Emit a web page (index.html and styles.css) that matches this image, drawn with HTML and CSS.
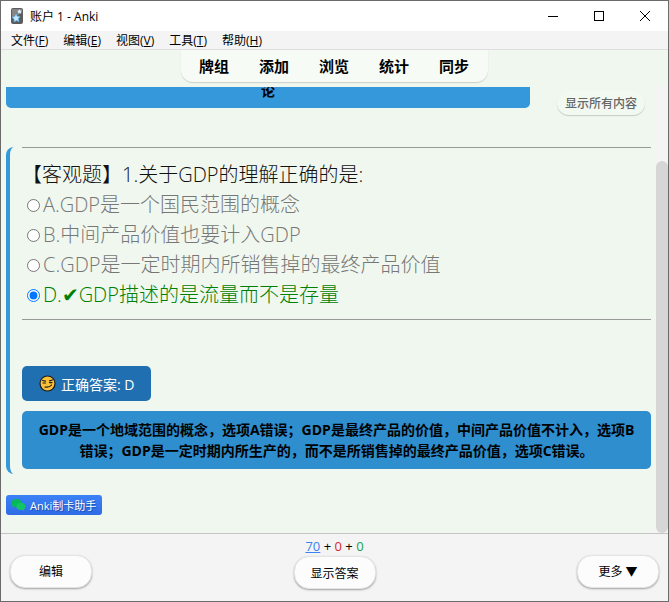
FILE: index.html
```
<!DOCTYPE html>
<html lang="zh-CN">
<head>
<meta charset="UTF-8">
<title>账户 1 - Anki</title>
<link rel="stylesheet" href="styles.css">
</head>
<body>
    <div class="window">
        <header class="titlebar">
            <svg class="app-icon" width="12" height="16" viewBox="0 0 12 16">
                <rect x="0" y="0" width="12" height="16" rx="2" fill="#5c5c5c"/>
                <path d="M1 1h10v4L1 10z" fill="#858585"/>
                <path d="M5 6l1.300 2.300 2.700.300-1.700 2.200.700 2.700-2.600-.900-2.400 1.300.100-2.800-2.100-1.800 2.700-.700z" fill="#c4e8fd" stroke="#58aee8" stroke-width=".8"/>
                <path d="M8.500 1.200l.7 1.400 1.600.2-1 1.200.2 1.600-1.500-.6-1.500.6.200-1.600-1-1.200 1.600-.2z" fill="#d9effc"/>
            </svg>
            <span class="window-title">账户 1 - Anki</span>
            <div class="window-controls">
                <button type="button" aria-label="最小化"><svg width="10" height="10"><path d="M0 5.500h10" stroke="#000"/></svg></button>
                <button type="button" aria-label="最大化"><svg width="10" height="10"><rect x="0.5" y="0.5" width="9" height="9" fill="none" stroke="#000"/></svg></button>
                <button type="button" aria-label="关闭"><svg width="10" height="10"><path d="M0 0l10 10M10 0L0 10" stroke="#000"/></svg></button>
            </div>
        </header>

        <nav class="menubar">
            <button type="button">文件(<u>F</u>)</button>
            <button type="button">编辑(<u>E</u>)</button>
            <button type="button">视图(<u>V</u>)</button>
            <button type="button">工具(<u>T</u>)</button>
            <button type="button">帮助(<u>H</u>)</button>
        </nav>

        <div class="toolbar">
            <nav class="tabs">
                <a href="#decks">牌组</a>
                <a href="#add">添加</a>
                <a href="#browse">浏览</a>
                <a href="#stats">统计</a>
                <a href="#sync">同步</a>
            </nav>
        </div>

        <main class="card-view">
            <div class="card">
                <div class="card-top">
                    <div class="chapter">论</div>
                    <button type="button" class="show-all">显示所有内容</button>
                </div>

                <section class="question">
                    <hr>
                    <form class="choices">
                        <p class="stem">【客观题】1.关于GDP的理解正确的是:</p>
                        <label><input type="radio" name="answer">A.GDP是一个国民范围的概念</label>
                        <label><input type="radio" name="answer">B.中间产品价值也要计入GDP</label>
                        <label><input type="radio" name="answer">C.GDP是一定时期内所销售掉的最终产品价值</label>
                        <label class="correct"><input type="radio" name="answer" checked>D.<span class="tick">✔</span>GDP描述的是流量而不是存量</label>
                    </form>
                    <hr>
                    <div class="answer">
                        <svg width="17" height="17" viewBox="0 0 17 17">
                            <circle cx="8.500" cy="8.500" r="7.500" fill="#fdc03a" stroke="#1c1c1c" stroke-width="1.200"/>
                            <path d="M3.500 5.500l3 .6M10.500 5.800l3-.8M4 8h2.500M10.500 7.600h2.500M6 12q4.500 .8 6.500-2" fill="none" stroke="#1c1c1c" stroke-width="1.200" stroke-linecap="round"/>
                        </svg>
                        <span>正确答案: D</span>
                    </div>
                    <div class="explain">GDP是一个地域范围的概念，选项A错误；GDP是最终产品的价值，中间产品价值不计入，选项B错误；GDP是一定时期内所生产的，而不是所销售掉的最终产品价值，选项C错误。</div>
                </section>

                <a class="helper" href="#helper">
                    <svg width="15" height="12" viewBox="0 0 15 12">
                        <path d="M5.500 0C2.500 0 .3 1.900.3 4.200c0 1.300.7 2.500 1.800 3.300L1.600 9l2-.9c.6.200 1.200.3 1.900.3 3 0 5.200-1.900 5.200-4.200S8.500 0 5.500 0z" fill="#07b85b"/>
                        <path d="M10 3.700c-2.600 0-4.600 1.600-4.600 3.700s2 3.700 4.600 3.700c.6 0 1.100-.1 1.600-.2l1.700.8-.4-1.400c1-.7 1.700-1.700 1.700-2.900 0-2.100-2-3.700-4.600-3.700z" fill="#12c466"/>
                    </svg>
                    <span>Anki制卡助手</span>
                </a>
            </div>
            <div class="scrollbar"><div class="thumb"></div></div>
        </main>

        <footer class="bottombar">
            <button type="button" class="pill">编辑</button>
            <div class="review">
                <div class="counts"><span class="new">70</span> + <span class="learn">0</span> + <span class="due">0</span></div>
                <button type="button" class="pill">显示答案</button>
            </div>
            <button type="button" class="pill">更多 ▼</button>
        </footer>
    </div>
</body>
</html>
```
FILE: styles.css
```
* {
    box-sizing: border-box;
}
body {
    margin: 0;
    font-family: "Open Sans", "Noto Sans CJK SC", sans-serif;
    font-size: 12px;
    color: #000;
}
button {
    font-family: inherit;
    font-size: 12px;
    color: inherit;
    border: none;
    background: none;
    padding: 0;
    cursor: pointer;
}
a {
    color: inherit;
    text-decoration: none;
}
.window {
    display: flex;
    flex-direction: column;
    height: 100vh;
    border: 1px solid #6b6b6b;
    background: #f0f7ef;
}

/* Title bar and menus */
.titlebar {
    display: flex;
    align-items: center;
    height: 30px;
    padding-left: 10px;
    background: #fff;
    flex: none;
}
.window-title {
    margin-left: 7px;
}
.window-controls {
    display: flex;
    margin-left: auto;
}
.window-controls button {
    width: 46px;
    height: 28px;
}
.window-controls svg {
    display: block;
    margin: auto;
}
.menubar {
    display: flex;
    align-items: center;
    gap: 15px;
    height: 19px;
    padding-left: 10px;
    background: #f4f4f4;
    border-bottom: 1px solid #dedede;
    flex: none;
}
.menubar button {
    line-height: 18px;
    padding-top: 2px;
}

/* Anki toolbar */
.toolbar {
    display: flex;
    justify-content: center;
    align-items: flex-start;
    height: 37px;
    flex: none;
}
.tabs {
    display: flex;
    gap: 30px;
    padding: 0 19px 0 18px;
    height: 32px;
    line-height: 32px;
    font-size: 15px;
    font-weight: 600;
    background: #f7fbf6;
    border-radius: 0 0 12px 12px;
    box-shadow: 0 1px 1px #ccd2cb;
}

/* Card */
.card-view {
    display: flex;
    flex: 1;
    min-height: 0;
    background: #f4f4f4;
}
.card {
    flex: 1;
    padding: 0 5px;
    background: #f0f7ef;
    border-radius: 0 0 10px 10px;
}
.card-top {
    display: flex;
    align-items: flex-start;
    justify-content: space-between;
    height: 60px;
    padding-right: 6px;
}
.chapter {
    width: 82%;
    height: 21px;
    line-height: 8px;
    overflow: hidden;
    background: #3498db;
    border-radius: 0 0 5px 5px;
    font-size: 14px;
    font-weight: bold;
    text-align: center;
}
.show-all {
    height: 24px;
    margin-top: 4px;
    padding: 0 8px;
    color: #666;
    font-weight: 500;
    border-radius: 12px;
    background: #f2f9f1;
    box-shadow: 0 1px 1px #c4cbc3;
}
.question {
    padding-left: 12px;
    border-left: 4px solid #3498db;
    border-radius: 8px;
    padding-bottom: 5px;
}
hr {
    margin: 0;
    border: none;
    border-top: 1px solid #999;
}
.choices {
    padding: 12px 0 9px;
    font-size: 20px;
    font-weight: 300;
    line-height: 30px;
    color: #777;
}
.stem {
    margin: 0;
    color: #111;
}
.choices label {
    display: flex;
    align-items: center;
    padding-left: 4px;
}
.choices input {
    width: 13px;
    height: 13px;
    margin: 0 3px 0 1px;
}
.choices .correct {
    color: #008000;
}
.tick {
    font-family: "DejaVu Sans", sans-serif;
    font-weight: bold;
}
.answer {
    display: inline-flex;
    align-items: center;
    gap: 5px;
    height: 35px;
    margin-top: 46px;
    padding: 0 17px;
    color: #fff;
    font-size: 14px;
    background: #206fb0;
    border-radius: 5px;
}
.explain {
    margin-top: 10px;
    padding: 8px 16px;
    background: #2e8ece;
    border-radius: 5px;
    font-size: 14px;
    line-height: 21px;
    font-weight: bold;
    text-align: center;
}
.helper {
    display: inline-flex;
    align-items: center;
    gap: 4px;
    height: 20px;
    margin-top: 21px;
    padding: 0 6px 0 5px;
    color: #fff;
    font-size: 11px;
    text-shadow: 1px 1px 1px #1d4aa8;
    background: linear-gradient(#3b82f6, #2f6be6);
    border-radius: 3px;
}
.scrollbar {
    display: flex;
    width: 12px;
    padding-top: 74px;
}
.thumb {
    flex: 1;
    background: #d6d6d6;
    border-radius: 6px;
}

/* Bottom bar */
.bottombar {
    display: flex;
    align-items: center;
    justify-content: space-between;
    height: 68px;
    padding: 0 9px;
    background: #f4f4f4;
    border-top: 1px solid #c4c4c4;
    flex: none;
}
.pill {
    width: 82px;
    height: 33px;
    margin-top: 7px;
    background: #fcfcfc;
    border: 1px solid #e4e4e4;
    border-radius: 15px;
    box-shadow: 0 1px 2px #a0a0a0;
}
.review {
    padding-bottom: 8px;
    text-align: center;
}
.review .pill {
    margin-top: 2px;
}
.counts {
    font-size: 13px;
    line-height: 16px;
}
.new {
    color: #3b82f6;
    text-decoration: underline;
}
.learn {
    color: #dc2626;
}
.due {
    color: #16a34a;
}
```
